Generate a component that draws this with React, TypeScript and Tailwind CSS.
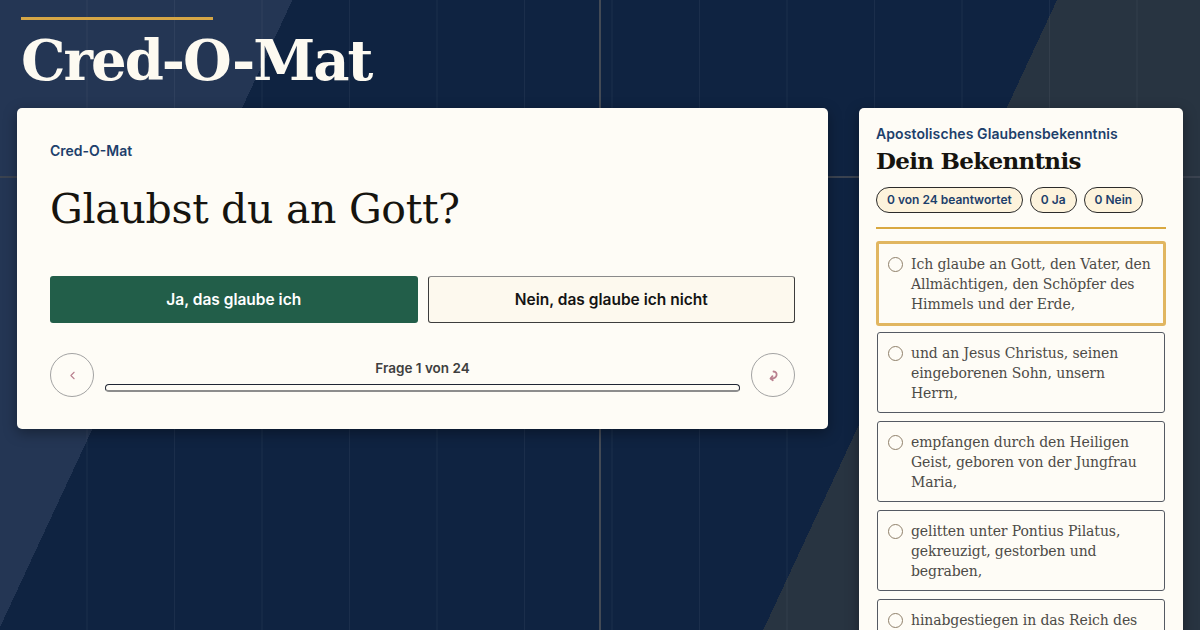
import { ChevronLeft } from 'lucide-react'

const lines = [
    ['Ich glaube an Gott, den Vater, den', 'Allmächtigen, den Schöpfer des', 'Himmels und der Erde,'],
    ['und an Jesus Christus, seinen', 'eingeborenen Sohn, unsern', 'Herrn,'],
    ['empfangen durch den Heiligen', 'Geist, geboren von der Jungfrau', 'Maria,'],
    ['gelitten unter Pontius Pilatus,', 'gekreuzigt, gestorben und', 'begraben,'],
    ['hinabgestiegen in das Reich des', 'Todes, am dritten Tage', 'auferstanden von den Toten,'],
]

function RedoIcon() {
    return (
        <svg width="14" height="14" viewBox="0 0 14 14" fill="none" stroke="#b9808f" strokeWidth="1.8" strokeLinecap="round" strokeLinejoin="round">
            <path d="M7.5 3.5 C10 3.5 11 5.5 10.5 7.5 C10 9.5 8 10.5 5 10.5" />
            <path d="M6.5 8.2 L4.5 10.6 L6.8 12.2" />
        </svg>
    )
}

export default function App() {
    return (
        <div className="relative h-[630px] w-[1200px] overflow-hidden font-['Inter',sans-serif] [background:linear-gradient(90deg,transparent_599px,#434a55_599px,#434a55_601px,transparent_601px),linear-gradient(180deg,transparent_176px,#3b4350_176px,#3b4350_178px,transparent_178px),linear-gradient(90deg,transparent_87px,rgba(255,255,255,0.05)_87px,rgba(255,255,255,0.05)_88px,transparent_88px)_0_0/87.5px_100%,linear-gradient(115deg,#243654_265px,#0f2341_265px,#0f2341_958px,#283441_958px)]">
            <header className="pl-[21px] pt-[17px]">
                <div className="h-[3px] w-[192px] bg-[#d5a646]" />
                <h1 className="mt-[12px] font-['DejaVu_Serif',serif] text-[56px] font-bold leading-none tracking-[-2px] text-[#fdfaf1]">Cred-O-Mat</h1>
            </header>

            <div className="mt-[20px] flex items-start gap-[31px] pl-[17px]">
                <section className="w-[811px] rounded-[5px] bg-[#fefcf6] px-[33px] pb-[32px] pt-[33px] shadow-[0_4px_14px_rgba(0,0,0,0.35)]">
                    <div className="text-[14px] font-semibold leading-5 text-[#1d3f6b]">Cred-O-Mat</div>
                    <h2 className="mt-[22px] font-['DejaVu_Serif',serif] text-[41px] leading-[52px] tracking-[-0.3px] text-[#16140f]">Glaubst du an Gott?</h2>
                    <div className="mt-[41px] grid grid-cols-2 gap-[10px]">
                        <button className="h-[47px] rounded-[3px] bg-[#225e49] text-[15.5px] font-semibold text-white">Ja, das glaube ich</button>
                        <button className="h-[47px] rounded-[3px] border border-[#3d3d3d] border-t-[#8a8a8a] bg-[#fdf9ee] text-[15.5px] font-semibold text-[#141414]">Nein, das glaube ich nicht</button>
                    </div>
                    <div className="mt-[30px] flex items-center gap-[11px]">
                        <button className="flex h-[44px] w-[44px] shrink-0 items-center justify-center rounded-full border border-[#a3a3a3]">
                            <ChevronLeft size={13} strokeWidth={2} color="#b9808f" />
                        </button>
                        <div className="flex flex-1 flex-col items-center">
                            <div className="text-[13.5px] font-semibold leading-5 text-[#3f3f3f]">Frage 1 von 24</div>
                            <div className="mt-[6px] h-[8px] w-full rounded-full border border-[#1f2533] border-b-2 border-b-[#8d8d8d]" />
                        </div>
                        <button className="flex h-[44px] w-[44px] shrink-0 items-center justify-center rounded-full border border-[#a3a3a3]">
                            <RedoIcon />
                        </button>
                    </div>
                </section>

                <aside className="w-[324px] rounded-[5px] bg-[#fefcf6] px-[17px] pt-[16px] shadow-[0_4px_14px_rgba(0,0,0,0.35)]">
                    <div className="text-[14px] font-semibold leading-5 tracking-[0.1px] text-[#1d3f6b]">Apostolisches Glaubensbekenntnis</div>
                    <h3 className="mt-[2px] font-['DejaVu_Serif',serif] text-[23px] font-bold leading-[30px] tracking-[-0.7px] text-[#16140f]">Dein Bekenntnis</h3>
                    <div className="mt-[11px] flex gap-[7px]">
                        {['0 von 24 beantwortet', '0 Ja', '0 Nein'].map((p) => (
                            <span key={p} className="flex h-[26px] items-center rounded-full border border-[#2b2b2b] bg-[#fdf3dc] px-[10px] text-[12px] font-semibold text-[#1d3f6b]">
                                {p}
                            </span>
                        ))}
                    </div>
                    <div className="mt-[14px] h-[2px] bg-[#d9a840]" />
                    <div className="mt-[12px] flex flex-col gap-[8px]">
                        {lines.map((item, i) => (
                            <div key={i} className={`flex gap-[8px] rounded-[3px] bg-[#fefcf6] ${i === 0 ? '-mb-[2px] border-[3px] border-[#e1b660] px-[9px] pb-[9px] pt-[10px]' : 'mx-[1px] border border-[#555a63] px-[10px] pb-[9px] pt-[10px]'}`}>
                                <span className="mt-[3px] h-[15px] w-[15px] shrink-0 rounded-full border-[1.5px] border-[#8f806a]" />
                                <p className="font-['DejaVu_Serif',serif] text-[14px] leading-5 tracking-[-0.1px] text-[#4d4b47]">
                                    {item.map((l) => (
                                        <span key={l} className="block whitespace-nowrap">
                                            {l}
                                        </span>
                                    ))}
                                </p>
                            </div>
                        ))}
                    </div>
                </aside>
            </div>
        </div>
    )
}
